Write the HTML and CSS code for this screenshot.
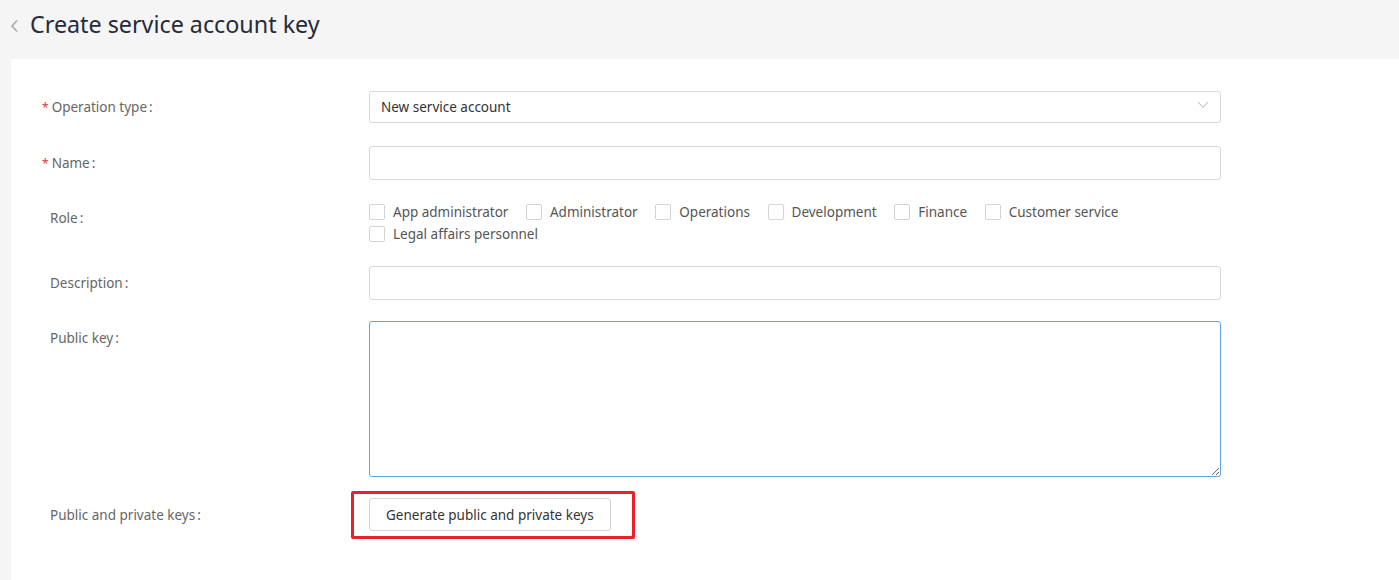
FILE: index.html
```html
<!DOCTYPE html>
<html lang="en">
<head>
<meta charset="utf-8">
<title>Create service account key</title>
<link rel="stylesheet" href="styles.css">
</head>
<body>
<header class="page-head">
  <svg class="back" width="10" height="14" viewBox="0 0 10 14"><polyline points="7,1.5 2,7 7,12.5" fill="none" stroke="#a8a8a8" stroke-width="1.5"/></svg>
  <h1 class="title">Create service account key</h1>
</header>
<main class="card">
  <form class="form">
    <div class="row row-op">
      <label class="label"><span class="req">*</span>Operation type<span class="colon">:</span></label>
      <div class="control">
        <div class="select">
          <span>New service account</span>
          <svg class="caret" width="12" height="8" viewBox="0 0 12 8"><polyline points="1,1 6,6.5 11,1" fill="none" stroke="#b3b3b3" stroke-width="1"/></svg>
        </div>
      </div>
    </div>
    <div class="row">
      <label class="label"><span class="req">*</span>Name<span class="colon">:</span></label>
      <div class="control"><input class="input" type="text"></div>
    </div>
    <div class="row">
      <label class="label plain">Role<span class="colon">:</span></label>
      <div class="control checks">
        <label class="check"><span class="box"></span>App administrator</label>
        <label class="check"><span class="box"></span>Administrator</label>
        <label class="check"><span class="box"></span>Operations</label>
        <label class="check"><span class="box"></span>Development</label>
        <label class="check"><span class="box"></span>Finance</label>
        <label class="check"><span class="box"></span>Customer service</label>
        <label class="check"><span class="box"></span>Legal affairs personnel</label>
      </div>
    </div>
    <div class="row">
      <label class="label plain">Description<span class="colon">:</span></label>
      <div class="control"><input class="input" type="text"></div>
    </div>
    <div class="row">
      <label class="label plain">Public key<span class="colon">:</span></label>
      <div class="control"><textarea class="textarea"></textarea></div>
    </div>
    <div class="row">
      <label class="label plain">Public and private keys<span class="colon">:</span></label>
      <div class="control">
        <div class="btn-wrap">
          <button type="button" class="btn">Generate public and private keys</button>
          <span class="highlight"></span>
        </div>
      </div>
    </div>
  </form>
</main>
</body>
</html>
```
FILE: styles.css
```css
* { box-sizing: border-box; }
html, body { margin: 0; padding: 0; }
body {
  background: #f5f5f5;
  font-family: "Noto Sans", "Open Sans", sans-serif;
  font-size: 13.5px;
  color: #333;
  height: 580px;
  overflow: hidden;
}
.page-head {
  height: 59px;
  display: flex;
  align-items: center;
  padding-left: 10px;
}
.back { margin-right: 10px; margin-bottom: 8px; }
.title {
  margin: 0;
  font-size: 23.3px;
  font-weight: 400;
  color: #252b3a;
  line-height: 1;
  padding-bottom: 9px;
}
.card {
  background: #fff;
  margin-left: 11px;
  height: 521px;
  padding-top: 32px;
}
.form { display: flex; flex-direction: column; gap: 21px; }
.row { display: flex; align-items: flex-start; }
.row-op { margin-bottom: 2px; }
.label {
  width: 358px;
  flex: none;
  padding-left: 31px;
  line-height: 35px;
  height: 34px;
  color: #666;
}
.row-op .label { line-height: 33px; height: 32px; }
.label.plain { padding-left: 39px; }
.req { color: #e5383e; margin-right: 3px; font-size: 12px; }
.colon { margin-left: 2px; }
.control { width: 852px; flex: none; }
.select {
  height: 32px;
  border: 1px solid #d9d9d9;
  border-radius: 3px;
  display: flex;
  align-items: center;
  justify-content: space-between;
  padding: 0 11px 0 11px;
  color: #333;
}
.caret { margin-top: -4px; }
.input {
  display: block;
  width: 100%;
  height: 34px;
  border: 1px solid #d9d9d9;
  border-radius: 3px;
  outline: none;
  font: inherit;
  padding: 0 11px;
}
.checks {
  display: flex;
  flex-wrap: wrap;
  column-gap: 17.6px;
}
.check {
  display: flex;
  align-items: center;
  height: 22px;
  color: #555;
}
.box {
  width: 16px;
  height: 16px;
  border: 1px solid #d4d4d4;
  border-radius: 2px;
  margin-right: 8px;
  background: #fff;
}
.textarea {
  display: block;
  width: 100%;
  height: 156px;
  border: 1px solid #5ea6e0;
  border-radius: 3px;
  outline: none;
  font: inherit;
  resize: vertical;
  padding: 6px 11px;
}
.btn-wrap { position: relative; display: inline-block; vertical-align: top; }
.btn {
  display: block;
  height: 33px;
  padding: 0 16px;
  border: 1px solid #d4d4d4;
  border-radius: 3px;
  background: #fff;
  font: inherit;
  color: #333;
  cursor: pointer;
}
.highlight {
  position: absolute;
  left: -18px;
  top: -7px;
  width: 284px;
  height: 48px;
  border: 3px solid #e8212b;
  border-radius: 2px;
  pointer-events: none;
}
```
